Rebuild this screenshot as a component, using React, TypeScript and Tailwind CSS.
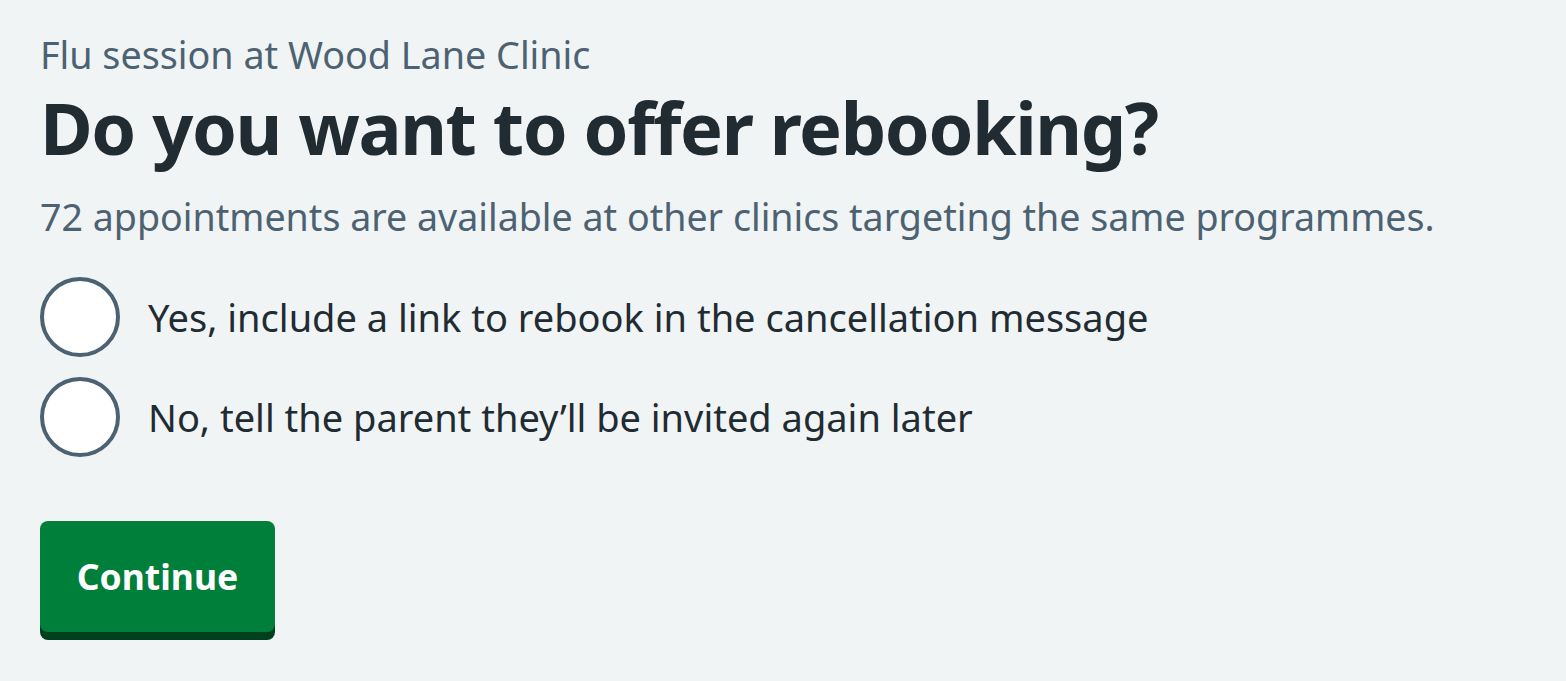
export default function App() {
  return (
    <div className="min-h-[681px] w-full bg-[#f0f4f5] px-10 pt-[30px] font-['Noto_Sans',sans-serif] text-[#212b32]">
      <span className="block text-[37.7px] leading-[50px] text-[#4c6272]">
        Flu session at Wood Lane Clinic
      </span>
      <h1 className="mt-[2px] text-[72px] font-bold leading-[90px] tracking-[-1.4px]">
        Do you want to offer rebooking?
      </h1>
      <p className="mt-[20px] text-[37.6px] leading-[50px] text-[#4c6272]">
        72 appointments are available at other clinics targeting the same programmes.
      </p>

      <div className="mt-[35px] flex flex-col gap-5">
        <label className="flex items-center gap-7">
          <span className="h-20 w-20 shrink-0 rounded-full border-4 border-[#4c6272] bg-white" />
          <span className="text-[38px] leading-[50px]">
            Yes, include a link to rebook in the cancellation message
          </span>
        </label>
        <label className="flex items-center gap-7">
          <span className="h-20 w-20 shrink-0 rounded-full border-4 border-[#4c6272] bg-white" />
          <span className="text-[38px] leading-[50px]">
            No, tell the parent they’ll be invited again later
          </span>
        </label>
      </div>

      <button className="mt-[64px] h-[111px] w-[235px] rounded-lg bg-[#007f3b] text-[35.5px] font-bold text-white shadow-[0_8px_0_#00401e]">
        Continue
      </button>
    </div>
  );
}
